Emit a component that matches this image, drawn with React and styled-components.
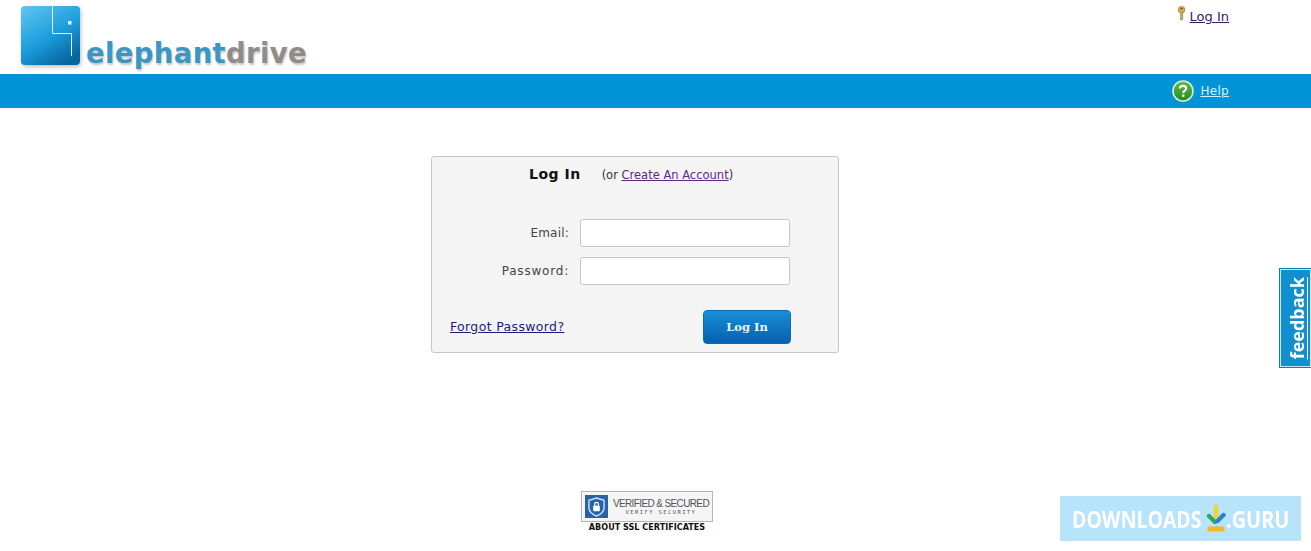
import React from "react";
import styled, { createGlobalStyle } from "styled-components";

const Global = createGlobalStyle`
  html, body { margin: 0; padding: 0; background: #fff; }
  body { font-family: "DejaVu Sans", Verdana, sans-serif; font-size: 12px; color: #333; }
`;
const Page = styled.div`
  position: relative; width: 1311px; height: 551px; overflow: hidden; background: #fff;
  display: flex; flex-direction: column;
`;
const Header = styled.header`
  height: 74px; display: flex; justify-content: space-between; align-items: flex-start;
  padding: 6px 82px 0 21px; box-sizing: border-box;
`;
const Brand = styled.div`display: flex; align-items: flex-start; gap: 5px;`;
const LogoSvg = styled.svg`display: block; filter: drop-shadow(1px 2px 2px rgba(0,0,0,.25));`;
const Wordmark = styled.div`
  font-family: "DejaVu Sans", sans-serif; font-weight: 700; font-size: 27.5px; line-height: 32px;
  letter-spacing: 0.35px; color: #3a97c4; text-shadow: 1px 2px 2px rgba(0,0,0,.22);
  margin-top: 31px; white-space: nowrap;
`;
const Drive = styled.span`color: #8f8c8a;`;
const UserLink = styled.div`display: flex; align-items: flex-start; gap: 3px;`;
const VisitedLink = styled.a`color: #3b1a5e; text-decoration: underline; line-height: 14px; margin-top: 4px; font-size: 13px;`;
const NavBar = styled.nav`
  height: 34px; background: #0093d7; display: flex; justify-content: flex-end; align-items: center;
  gap: 6px; padding-right: 82px;
`;
const HelpLink = styled.a`color: #d4f3ff; text-decoration: underline; font-size: 12px; letter-spacing: .3px;`;
const Main = styled.main`flex: 1; display: flex; flex-direction: column;`;
const Card = styled.section`
  width: 408px; height: 197px; margin: 48px 0 0 431px; box-sizing: border-box;
  background: #f4f4f5; border: 1px solid #c8c8c8; border-radius: 3px;
  display: flex; flex-direction: column; padding: 9px 47px 8px 18px;
`;
const TitleRow = styled.div`display: flex; align-items: baseline; padding-left: 79px; height: 24px;`;
const Title = styled.h1`margin: 0 21px 0 0; font-size: 14px; font-weight: 700; color: #111; letter-spacing: .5px;`;
const Aside = styled.span`font-size: 11.5px; color: #333;`;
const AccountLink = styled.a`color: #5b2a86; text-decoration: underline;`;
const Fields = styled.div`
  display: grid; grid-template-columns: 119px 210px; column-gap: 11px; row-gap: 10px;
  align-items: center; margin-top: 29px;
`;
const Label = styled.label`
  text-align: right; font-size: 12px; color: #444; letter-spacing: ${p => p.$spacing}px;
`;
const Input = styled.input`
  box-sizing: border-box; width: 210px; height: 28px; background: #fff;
  border: 1px solid #c6c6c6; border-radius: 3px; padding: 0 6px; outline: none;
`;
const Actions = styled.div`display: flex; justify-content: space-between; align-items: center; margin-top: 25px;`;
const ForgotLink = styled.a`color: #1c1c78; text-decoration: underline; font-size: 12.5px; letter-spacing: .35px; margin-top: -2px;`;
const Submit = styled.button`
  width: 88px; height: 34px; border: 1px solid #0a6db5; border-radius: 4px; padding: 0;
  background: linear-gradient(#1a8fd6, #0560b0); color: #e8f6ff;
  font-family: "DejaVu Serif", "DejaVu Sans", serif; font-weight: 700; font-size: 11.5px;
`;
const Seal = styled.div`
  align-self: flex-start; margin: 138px 0 0 581px; width: 132px;
  display: flex; flex-direction: column; align-items: center;
`;
const SealBox = styled.div`
  box-sizing: border-box; width: 132px; height: 31px; border: 1px solid #b5b5b5; background: #f5f5f5;
  display: flex; align-items: stretch; padding: 3px; gap: 5px;
`;
const SealIcon = styled.div`width: 24px; background: #2a62a8; display: flex; align-items: center; justify-content: center;`;
const SealText = styled.div`display: flex; flex-direction: column; align-items: center; justify-content: center; flex: 1; color: #50535a;`;
const SealMain = styled.div`font-family: "Liberation Sans", sans-serif; font-size: 10px; letter-spacing: -.62px; line-height: 11px; white-space: nowrap; margin-top: 1px;`;
const SealSub = styled.div`font-family: "DejaVu Sans Mono", monospace; font-size: 5.5px; letter-spacing: 1.4px; line-height: 7px;`;
const SealCaption = styled.div`font-family: "DejaVu Sans", sans-serif; font-size: 8.1px; font-weight: 700; color: #111; white-space: nowrap;`;
const Feedback = styled.a`
  position: absolute; left: 1279px; top: 268px; width: 32px; height: 100px; box-sizing: border-box;
  background: #118fce; border: 1px solid #0d7fb8; box-shadow: inset 0 0 0 1px #c8e8f6; border-right: 0;
  display: flex; align-items: center; justify-content: center; padding-left: 3px; color: #fff;
  font-family: "Open Sans", sans-serif; font-weight: 700; font-size: 18px;
`;
const FeedbackText = styled.span`writing-mode: vertical-rl; transform: rotate(180deg); line-height: 1;`;
const Watermark = styled.div`
  position: absolute; left: 1060px; top: 496px; width: 241px; height: 45px; box-sizing: border-box;
  background: #b7e3fb; padding-left: 12px;
  display: flex; align-items: center; color: #fff;
  font-family: "Open Sans", sans-serif; font-weight: 700; font-size: 24px;
`;
const WatermarkWord = styled.span`
  display: inline-block; width: ${p => p.$width}px; white-space: nowrap;
  transform: scaleX(${p => p.$scale}); transform-origin: left center;
`;
const DownloadSvg = styled.svg`margin: -1px 0 0 5px; flex-shrink: 0;`;

const LogoIcon = () => (
  <LogoSvg width="60" height="60" viewBox="0 0 60 60">
    <defs>
      <linearGradient id="lg" x1="0.1" y1="0" x2="0.7" y2="1">
        <stop offset="0" stopColor="#5cc3ee" />
        <stop offset="0.55" stopColor="#1c9ddd" />
        <stop offset="1" stopColor="#05659f" />
      </linearGradient>
    </defs>
    <rect x="0" y="0" width="59" height="59" rx="4" fill="url(#lg)" />
    <path d="M31.5 0V27.5H50.5V50" fill="none" stroke="#d8f1fb" strokeWidth="1" />
    <rect x="47" y="15" width="3.5" height="3.5" fill="#e8f8ff" />
  </LogoSvg>
);
const KeyIcon = () => (
  <svg width="10" height="17" viewBox="0 0 12 18" style={{ display: "block", marginTop: -1 }}>
    <circle cx="5.5" cy="4.5" r="4" fill="#d9ad52" stroke="#a8873d" />
    <ellipse cx="5.5" cy="3.2" rx="2" ry="1" fill="#8a6a28" />
    <path d="M4 8H7V16L5.5 17.5L4 16Z" fill="#bca867" stroke="#8f8a68" strokeWidth=".6" />
  </svg>
);
const HelpIcon = () => (
  <svg width="22" height="22" viewBox="0 0 22 22" style={{ display: "block" }}>
    <defs>
      <linearGradient id="hg" x1="0" y1="0" x2="0" y2="1">
        <stop offset="0" stopColor="#66b94a" />
        <stop offset="1" stopColor="#1f8a1f" />
      </linearGradient>
    </defs>
    <circle cx="11" cy="11" r="10" fill="url(#hg)" stroke="#d6eed0" strokeWidth="1.6" />
    <path d="M7.8 8.6C7.8 6.8 9.2 5.9 11 5.9C12.9 5.9 14.2 6.9 14.2 8.5C14.2 10.5 11.2 10.7 11.2 13" fill="none" stroke="#fff" strokeWidth="2.1" />
    <rect x="10" y="14.4" width="2.4" height="2.4" fill="#fff" />
  </svg>
);
const ShieldIcon = () => (
  <svg width="17" height="20" viewBox="0 0 18 21">
    <path d="M9 1L17 3.5V11C17 15.5 13 18.5 9 20C5 18.5 1 15.5 1 11V3.5Z" fill="none" stroke="#cfe0f2" strokeWidth="1.5" />
    <rect x="5.5" y="9" width="7" height="6" rx="1" fill="#fff" />
    <path d="M7 9V7.5C7 5 11 5 11 7.5V9" fill="none" stroke="#fff" strokeWidth="1.3" />
  </svg>
);
const DownloadMark = () => (
  <DownloadSvg width="20" height="27" viewBox="0 0 20 27">
    <path d="M10 2V11" stroke="#f5d327" strokeWidth="4.4" strokeLinecap="round" />
    <path d="M3 11L9 17" stroke="#33a852" strokeWidth="4.4" strokeLinecap="round" />
    <path d="M17.5 10L11.5 16" stroke="#2f7fd0" strokeWidth="4.4" strokeLinecap="round" />
    <rect x="1.5" y="21.5" width="17" height="5" rx="1.5" fill="#f9b81f" />
  </DownloadSvg>
);

export default function App() {
  return (
    <Page>
      <Global />
      <Header>
        <Brand>
          <LogoIcon />
          <Wordmark>elephant<Drive>drive</Drive></Wordmark>
        </Brand>
        <UserLink>
          <KeyIcon />
          <VisitedLink href="#">Log In</VisitedLink>
        </UserLink>
      </Header>
      <NavBar>
        <HelpIcon />
        <HelpLink href="#">Help</HelpLink>
      </NavBar>
      <Main>
        <Card>
          <TitleRow>
            <Title>Log In</Title>
            <Aside>(or <AccountLink href="#">Create An Account</AccountLink>)</Aside>
          </TitleRow>
          <Fields>
            <Label $spacing={0.2}>Email:</Label>
            <Input type="text" />
            <Label $spacing={0.8}>Password:</Label>
            <Input type="password" />
          </Fields>
          <Actions>
            <ForgotLink href="#">Forgot Password?</ForgotLink>
            <Submit>Log In</Submit>
          </Actions>
        </Card>
        <Seal>
          <SealBox>
            <SealIcon><ShieldIcon /></SealIcon>
            <SealText>
              <SealMain>VERIFIED &amp; SECURED</SealMain>
              <SealSub>VERIFY SECURITY</SealSub>
            </SealText>
          </SealBox>
          <SealCaption>ABOUT SSL CERTIFICATES</SealCaption>
        </Seal>
      </Main>
      <Feedback href="#"><FeedbackText>feedback</FeedbackText></Feedback>
      <Watermark>
        <WatermarkWord $width={129} $scale={0.81}>DOWNLOADS</WatermarkWord>
        <DownloadMark />
        <WatermarkWord $width={60} $scale={0.83}>.GURU</WatermarkWord>
      </Watermark>
    </Page>
  );
}
